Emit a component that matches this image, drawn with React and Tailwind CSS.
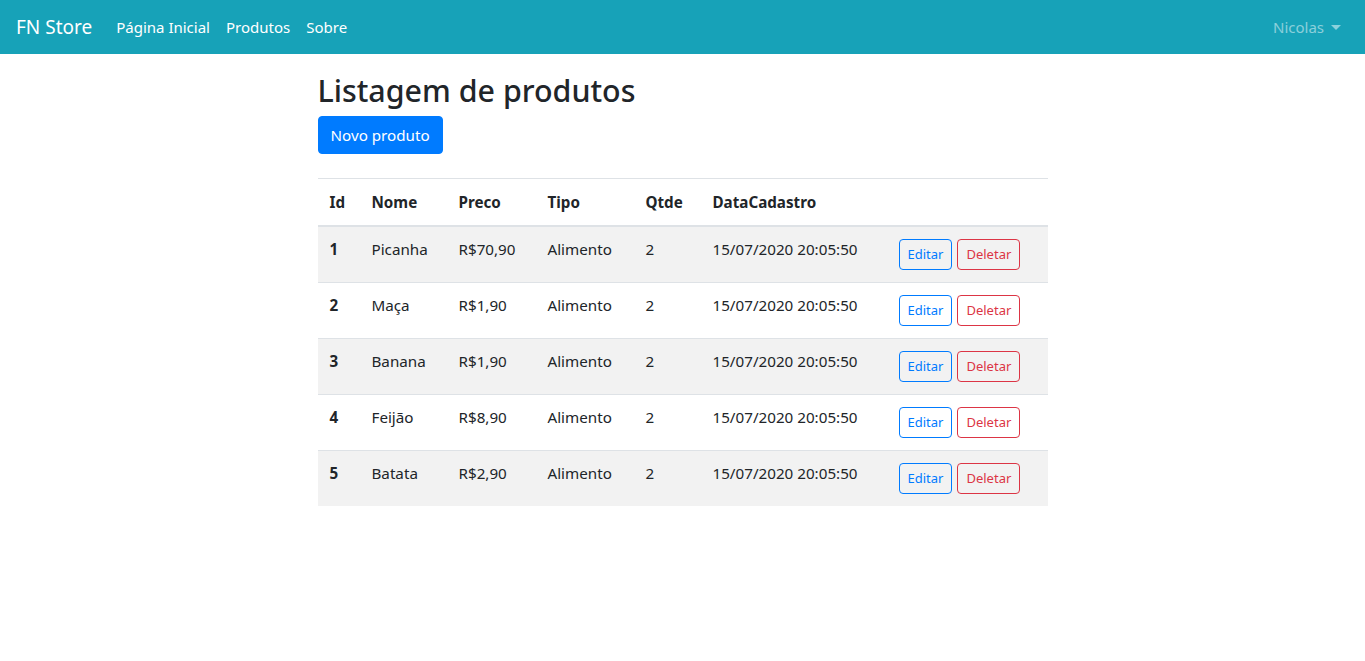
const products = [
  { id: 1, nome: "Picanha", preco: "R$70,90" },
  { id: 2, nome: "Maça", preco: "R$1,90" },
  { id: 3, nome: "Banana", preco: "R$1,90" },
  { id: 4, nome: "Feijão", preco: "R$8,90" },
  { id: 5, nome: "Batata", preco: "R$2,90" },
];

function Navbar() {
  return (
    <nav className="flex items-center justify-between h-[54px] px-4 bg-[#17a2b8] text-[15px]">
      <div className="flex items-center">
        <a href="#" className="text-[19px] text-white mr-4 leading-[30px]">
          FN Store
        </a>
        <a href="#" className="px-2 text-white">Página Inicial</a>
        <a href="#" className="px-2 text-white">Produtos</a>
        <a href="#" className="px-2 text-white">Sobre</a>
      </div>
      <div className="flex items-center px-2 text-white/50">
        Nicolas
        <span className="ml-[7px] w-0 h-0 border-x-[5px] border-x-transparent border-t-[5px] border-t-white/50" />
      </div>
    </nav>
  );
}

function App() {
  return (
    <div
      className="min-h-screen bg-white text-[#212529] text-[15.2px] leading-6"
      style={{ fontFamily: '"Noto Sans", sans-serif' }}
    >
      <Navbar />
      <main className="w-[730px] mx-auto pt-4">
        <h1 className="text-[30.4px] font-medium leading-[38px] pt-[2px] mb-[6px]">Listagem de produtos</h1>
        <button className="px-3 py-[6px] border border-[#007bff] bg-[#007bff] text-white rounded">
          Novo produto
        </button>

        {/* tabela */}
        <table className="w-full mt-6 border-collapse text-left">
          <thead>
            <tr className="border-t border-[#dee2e6] border-b-2">
              <th className="px-3 py-[11px] w-[42px]">Id</th>
              <th className="px-3 py-[11px] w-[87px]">Nome</th>
              <th className="px-3 py-[11px] w-[89px]">Preco</th>
              <th className="px-3 py-[11px] w-[98px]">Tipo</th>
              <th className="px-3 py-[11px] w-[67px]">Qtde</th>
              <th className="px-3 py-[11px] w-[186px]">DataCadastro</th>
              <th className="px-3 py-[11px]"></th>
            </tr>
          </thead>
          <tbody>
            {products.map((p, i) => (
              <tr key={p.id} className={`border-t border-[#dee2e6] ${i % 2 === 0 ? "bg-[#f2f2f2]" : ""}`}>
                <th className="px-3 pt-[10px] align-top">{p.id}</th>
                <td className="px-3 pt-[10px] align-top">{p.nome}</td>
                <td className="px-3 pt-[10px] align-top">{p.preco}</td>
                <td className="px-3 pt-[10px] align-top">Alimento</td>
                <td className="px-3 pt-[10px] align-top">2</td>
                <td className="px-3 pt-[10px] align-top">15/07/2020 20:05:50</td>
                <td className="p-3 align-top">
                  <div className="flex gap-[5px]">
                    <button className="px-2 py-1 text-[13px] leading-[21px] border border-[#007bff] text-[#007bff] rounded">
                      Editar
                    </button>
                    <button className="px-2 py-1 text-[13px] leading-[21px] border border-[#dc3545] text-[#dc3545] rounded">
                      Deletar
                    </button>
                  </div>
                </td>
              </tr>
            ))}
          </tbody>
        </table>
      </main>
    </div>
  );
}

export default App;
